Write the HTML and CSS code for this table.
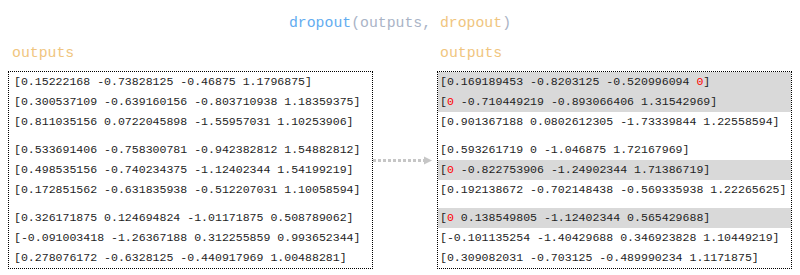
FILE: index.html
```html
<!DOCTYPE html>
<html>
<head>
<meta charset="utf-8">
<link rel="stylesheet" href="styles.css">
</head>
<body>
<div class="title"><span class="fn">dropout</span><span class="punc">(outputs, </span><span class="arg">dropout</span><span class="punc">)</span></div>
<div class="columns">
  <div class="col col-left">
    <div class="label label-left">outputs</div>
    <div class="box box-left">
      <div class="row">[0.15222168 -0.73828125 -0.46875 1.1796875]</div>
      <div class="row">[0.300537109 -0.639160156 -0.803710938 1.18359375]</div>
      <div class="row">[0.811035156 0.0722045898 -1.55957031 1.10253906]</div>
      <div class="gap"></div>
      <div class="row">[0.533691406 -0.758300781 -0.942382812 1.54882812]</div>
      <div class="row">[0.498535156 -0.740234375 -1.12402344 1.54199219]</div>
      <div class="row">[0.172851562 -0.631835938 -0.512207031 1.10058594]</div>
      <div class="gap"></div>
      <div class="row">[0.326171875 0.124694824 -1.01171875 0.508789062]</div>
      <div class="row">[-0.091003418 -1.26367188 0.312255859 0.993652344]</div>
      <div class="row">[0.278076172 -0.6328125 -0.440917969 1.00488281]</div>
    </div>
  </div>
  <div class="col col-mid">
    <svg class="arrow" width="64" height="9" viewBox="0 0 64 9">
      <line x1="0" y1="4.5" x2="51" y2="4.5" stroke="#c6c6c6" stroke-width="3" stroke-dasharray="3 2"/>
      <polygon points="51,0.5 59,4.5 51,8.5" fill="#c6c6c6"/>
    </svg>
  </div>
  <div class="col col-right">
    <div class="label label-right">outputs</div>
    <div class="box box-right">
      <div class="row hl">[0.169189453 -0.8203125 -0.520996094 <span class="z">0</span>]</div>
      <div class="row hl">[<span class="z">0</span> -0.710449219 -0.893066406 1.31542969]</div>
      <div class="row">[0.901367188 0.0802612305 -1.73339844 1.22558594]</div>
      <div class="gap"></div>
      <div class="row">[0.593261719 0 -1.046875 1.72167969]</div>
      <div class="row hl">[<span class="z">0</span> -0.822753906 -1.24902344 1.71386719]</div>
      <div class="row">[0.192138672 -0.702148438 -0.569335938 1.22265625]</div>
      <div class="gap"></div>
      <div class="row hl">[<span class="z">0</span> 0.138549805 -1.12402344 0.565429688]</div>
      <div class="row">[-0.101135254 -1.40429688 0.346923828 1.10449219]</div>
      <div class="row">[0.309082031 -0.703125 -0.489990234 1.1171875]</div>
    </div>
  </div>
</div>
</body>
</html>
```
FILE: styles.css
```css
html, body {
  margin: 0;
  padding: 0;
  background: #ffffff;
}
body {
  font-family: "Liberation Mono", "Courier New", monospace;
  color: #1e1e1e;
}
.title {
  padding-top: 14px;
  height: 18px;
  line-height: 18px;
  font-size: 14.8px;
  text-align: center;
  white-space: pre;
}
.fn { color: #62acf0; }
.punc { color: #a9b3c6; }
.arg { color: #f0c57e; }
.columns {
  display: flex;
  padding: 12px 0 0 8px;
}
.label {
  height: 18px;
  line-height: 18px;
  font-size: 14.8px;
  color: #f0c57e;
  margin-bottom: 9px;
}
.label-left { padding-left: 4px; }
.label-right { padding-left: 3px; }
.col-left { width: 365px; }
.col-mid {
  width: 64px;
  padding-top: 112px;
}
.arrow { display: block; }
.col-right { width: 355px; }
.box {
  border: 1px dotted #000;
  font-size: 11.55px;
}
.row {
  height: 20px;
  line-height: 20px;
  white-space: pre;
}
.box-left .row { padding-left: 5px; }
.box-right .row { padding-left: 2px; }
.hl { background: #d9d9d9; }
.z { color: #ff0000; }
.gap { height: 8px; }
```
